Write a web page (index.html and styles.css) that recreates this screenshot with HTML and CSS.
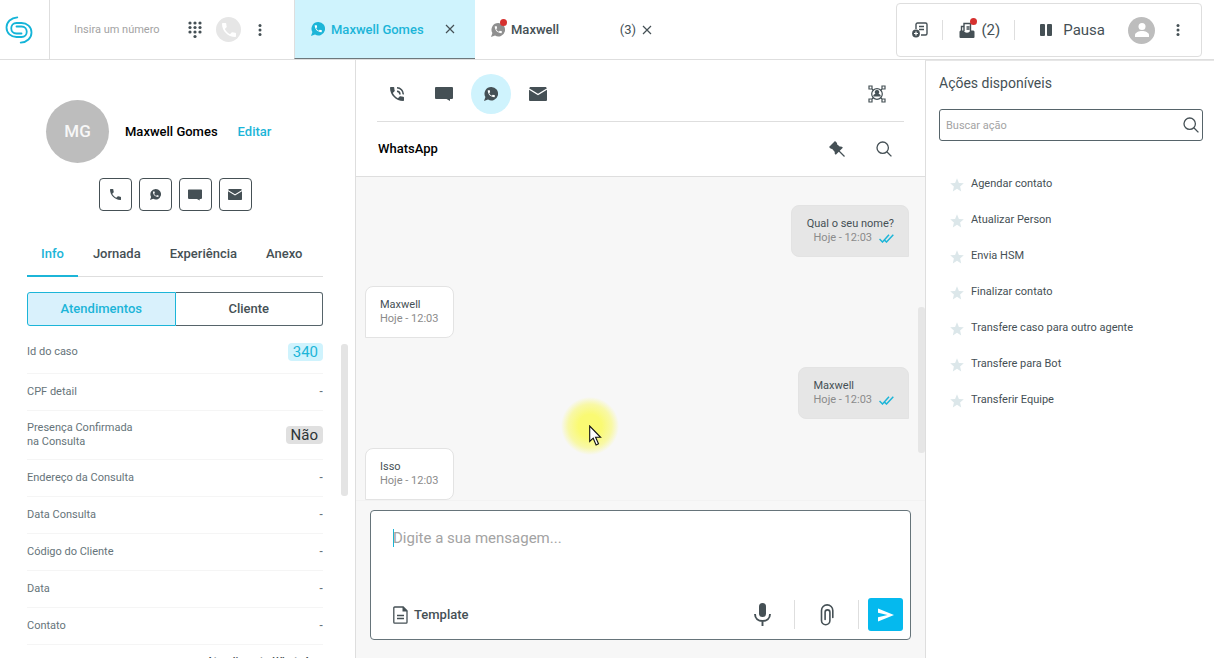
FILE: index.html
```html
<!DOCTYPE html>
<html lang="pt-BR">
<head>
  <meta charset="UTF-8">
  <meta name="viewport" content="width=device-width, initial-scale=1.0">
  <title>Atendimento - Maxwell Gomes</title>
  <link rel="stylesheet" href="styles.css">
</head>
<body>

  <!-- shared icons -->
  <svg class="sprite" aria-hidden="true">
    <symbol id="i-phone" viewBox="3 3 18 18">
      <path fill="currentColor" d="M6.62 10.79c1.44 2.83 3.76 5.14 6.59 6.59l2.2-2.2c.27-.27.67-.36 1.02-.24 1.12.37 2.33.57 3.57.57.55 0 1 .45 1 1V20c0 .55-.45 1-1 1-9.39 0-17-7.61-17-17 0-.55.45-1 1-1h3.5c.55 0 1 .45 1 1 0 1.25.2 2.45.57 3.57.11.35.03.74-.25 1.02l-2.2 2.2z"/>
    </symbol>
    <symbol id="i-whats" viewBox="0 0 24 24">
      <path fill="currentColor" d="M12.5 0a11.5 11.5 0 1 1-5.6 21.5L0 24l2.4-6.8A11.5 11.5 0 0 1 12.5 0z"/>
      <path class="cut" transform="translate(4.4 3.4) scale(.67)" d="M6.62 10.79c1.44 2.83 3.76 5.14 6.59 6.59l2.2-2.2c.27-.27.67-.36 1.02-.24 1.12.37 2.33.57 3.57.57.55 0 1 .45 1 1V20c0 .55-.45 1-1 1-9.39 0-17-7.61-17-17 0-.55.45-1 1-1h3.5c.55 0 1 .45 1 1 0 1.25.2 2.45.57 3.57.11.35.03.74-.25 1.02l-2.2 2.2z"/>
    </symbol>
    <symbol id="i-chat" viewBox="0 0 18 14">
      <path fill="currentColor" d="M1 0h16a1 1 0 0 1 1 1v10a1 1 0 0 1-1 1h-2v2l-3.5-2H1a1 1 0 0 1-1-1V1a1 1 0 0 1 1-1z"/>
    </symbol>
    <symbol id="i-mail" viewBox="0 0 18 14">
      <path fill="currentColor" d="M1.2 0h15.6L18 1.2 9 6.7 0 1.2zM0 2.8l9 5.5 9-5.5V13a1 1 0 0 1-1 1H1a1 1 0 0 1-1-1z"/>
    </symbol>
    <symbol id="i-dots" viewBox="0 0 4 12">
      <g fill="currentColor"><circle cx="2" cy="1.5" r="1.5"/><circle cx="2" cy="6" r="1.5"/><circle cx="2" cy="10.5" r="1.5"/></g>
    </symbol>
    <symbol id="i-close" viewBox="0 0 10 10">
      <path fill="none" stroke="currentColor" stroke-width="1.2" d="M1 1l8 8M9 1L1 9"/>
    </symbol>
    <symbol id="i-search" viewBox="0 0 16 16">
      <g fill="none" stroke="currentColor" stroke-width="1.3"><circle cx="6.7" cy="6.7" r="5.7"/><path d="M10.8 10.8l4.6 4.6"/></g>
    </symbol>
    <symbol id="i-check" viewBox="0 0 15 9">
      <path fill="none" stroke="currentColor" stroke-width="1.5" d="M.5 5l3 3L10 .8M5 5.6l2.5 2.4L14.3.8"/>
    </symbol>
    <symbol id="i-star" viewBox="0 0 14 14">
      <path fill="currentColor" d="M7 .3l1.9 4.6 4.9.4-3.7 3.2 1.1 4.9L7 10.8l-4.2 2.6 1.1-4.9L.2 5.3l4.9-.4z"/>
    </symbol>
  </svg>

  <header class="topbar">
    <a class="logo" href="#" aria-label="Início">
      <svg width="28" height="28" viewBox="0 0 28 28" fill="none" stroke="#14b4d8" stroke-width="1.8" stroke-linecap="round">
        <path d="M12.3 1.3C6 1.8 1.5 6 1.5 11.500c0 5.500 4.500 9.500 10 9.500h5c7 0 7-10.500 0-10.500h-5"/>
        <path d="M15.700 26.700C22 26.200 26.500 22 26.500 16.500c0-5.500-4.500-9.500-10-9.500h-5c-7 0-7 10.500 0 10.500h5"/>
      </svg>
    </a>

    <form class="dialer">
      <input class="dial-input" type="text" aria-label="Número" placeholder="Insira um número">
      <button class="icon-btn" type="button" aria-label="Teclado">
        <svg width="14" height="18" viewBox="0 0 14 18" fill="currentColor">
          <circle cx="2" cy="2" r="1.6"/><circle cx="7" cy="2" r="1.6"/><circle cx="12" cy="2" r="1.6"/>
          <circle cx="2" cy="6.5" r="1.6"/><circle cx="7" cy="6.5" r="1.6"/><circle cx="12" cy="6.5" r="1.6"/>
          <circle cx="2" cy="11" r="1.6"/><circle cx="7" cy="11" r="1.6"/><circle cx="12" cy="11" r="1.6"/>
          <circle cx="7" cy="15.5" r="1.6"/>
        </svg>
      </button>
      <button class="call-btn" type="button" aria-label="Ligar"><svg width="14" height="14"><use href="#i-phone"/></svg></button>
      <button class="icon-btn" type="button" aria-label="Mais opções"><svg width="4" height="12"><use href="#i-dots"/></svg></button>
    </form>

    <nav class="tabs">
      <div class="tab active">
        <svg width="14" height="14"><use href="#i-whats"/></svg>
        <a class="tab-name" href="#">Maxwell Gomes</a>
        <button class="icon-btn" type="button" aria-label="Fechar"><svg width="10" height="10"><use href="#i-close"/></svg></button>
      </div>
      <div class="tab waiting">
        <span class="badge-wrap"><svg class="muted" width="14" height="14"><use href="#i-whats"/></svg><i class="dot"></i></span>
        <a class="tab-name" href="#">Maxwell</a>
        <span class="count">(3)</span>
        <button class="icon-btn" type="button" aria-label="Fechar"><svg width="10" height="10"><use href="#i-close"/></svg></button>
      </div>
    </nav>

    <div class="agent-box">
      <button class="agent-item" type="button" aria-label="Novo caso">
        <svg width="16" height="16" viewBox="0 0 16 16" fill="none" stroke="currentColor" stroke-width="1.4">
          <path d="M4 7V2.5A1.5 1.5 0 0 1 5.500 1h8A1.5 1.5 0 0 1 15 2.500v9a1.500 1.500 0 0 1-1.500 1.500H9M7 4.500h5M7 7.500h5"/>
          <circle cx="4" cy="11.5" r="3.9" fill="currentColor" stroke="none"/>
          <path stroke="#fff" stroke-width="1.2" d="M4 9.500v4M2 11.500h4"/>
        </svg>
      </button>
      <button class="agent-item queue" type="button">
        <span class="badge-wrap">
          <svg width="16" height="16" viewBox="0 0 16 16" fill="none" stroke="currentColor" stroke-width="1.4">
            <path d="M2.500 9V4.500H5M5 9V1.500h6.500V9M7.500 5h3M7.500 7h3"/>
            <path fill="currentColor" stroke="none" d="M1.500 8.500h3.300c.6 1.500 1.700 2.200 3.200 2.200s2.600-.7 3.200-2.200h3.300l1 1V15a1 1 0 0 1-1 1h-13a1 1 0 0 1-1-1V9.500z"/>
          </svg>
          <i class="dot"></i>
        </span>
        (2)
      </button>
      <button class="agent-item pause" type="button">
        <svg width="12" height="12" viewBox="0 0 12 12" fill="currentColor"><rect width="5" height="12" rx="1"/><rect x="7" width="5" height="12" rx="1"/></svg>
        Pausa
      </button>
      <span class="agent-photo">
        <svg width="14" height="14" viewBox="0 0 14 14" fill="#fff"><circle cx="7" cy="3.500" r="3.500"/><path d="M0 14v-2c0-2.500 4-4 7-4s7 1.500 7 4v2z"/></svg>
      </span>
      <button class="icon-btn" type="button" aria-label="Menu"><svg width="4" height="12"><use href="#i-dots"/></svg></button>
    </div>
  </header>

  <main class="layout">
    <aside class="client">
      <div class="person">
        <div class="avatar">MG</div>
        <h1>Maxwell Gomes</h1>
        <a href="#">Editar</a>
      </div>

      <div class="contact-btns">
        <button type="button" aria-label="Telefone"><svg width="11" height="11"><use href="#i-phone"/></svg></button>
        <button type="button" aria-label="WhatsApp"><svg width="11" height="11"><use href="#i-whats"/></svg></button>
        <button type="button" aria-label="Chat"><svg width="14" height="12"><use href="#i-chat"/></svg></button>
        <button type="button" aria-label="E-mail"><svg width="14" height="11"><use href="#i-mail"/></svg></button>
      </div>

      <nav class="client-tabs">
        <a class="active" href="#">Info</a>
        <a href="#">Jornada</a>
        <a href="#">Experiência</a>
        <a href="#">Anexo</a>
      </nav>

      <div class="switch">
        <button class="active" type="button">Atendimentos</button>
        <button type="button">Cliente</button>
      </div>

      <div class="case">
        <dl>
          <div><dt>Id do caso</dt><dd><span class="tag blue">340</span></dd></div>
          <div><dt>CPF detail</dt><dd>-</dd></div>
          <div><dt>Presença Confirmada na Consulta</dt><dd><span class="tag">Não</span></dd></div>
          <div><dt>Endereço da Consulta</dt><dd>-</dd></div>
          <div><dt>Data Consulta</dt><dd>-</dd></div>
          <div><dt>Código do Cliente</dt><dd>-</dd></div>
          <div><dt>Data</dt><dd>-</dd></div>
          <div><dt>Contato</dt><dd>-</dd></div>
          <div class="origin"><dt></dt><dd>Atendimento WhatsApp</dd></div>
        </dl>
        <span class="case-thumb"></span>
      </div>
    </aside>

    <section class="conversation">
      <div class="channels">
        <button type="button" aria-label="Ligação">
          <svg width="14" height="14" viewBox="3 3 18 18">
            <use href="#i-phone" x="3" y="3" width="18" height="18"/>
            <path fill="none" stroke="currentColor" stroke-width="2" d="M12 8.500a4 4 0 0 1 3.800 4M12 4a8.300 8.300 0 0 1 8 8.500"/>
          </svg>
        </button>
        <button type="button" aria-label="Chat"><svg width="18" height="14"><use href="#i-chat"/></svg></button>
        <button class="active" type="button" aria-label="WhatsApp"><svg width="14" height="14"><use href="#i-whats"/></svg></button>
        <button type="button" aria-label="E-mail"><svg width="18" height="14"><use href="#i-mail"/></svg></button>
        <button class="focus-btn" type="button" aria-label="Dados do contato">
          <svg width="18" height="18" viewBox="0 0 18 18" fill="none" stroke="currentColor" stroke-width="1.2">
            <path d="M1 1h3v3H1zM14 1h3v3h-3zM1 14h3v3H1zM14 14h3v3h-3zM4 4l1.500 1.500M14 4l-1.500 1.500M4 14l1.500-1.500M14 14l-1.500-1.500"/>
            <circle cx="9" cy="9" r="5.300"/>
            <path fill="currentColor" stroke="none" d="M9 5a2.200 2.200 0 0 1 1.600 3.800c1.500.5 2.200 1.300 2.200 2.700H5.200c0-1.400.7-2.200 2.200-2.700A2.200 2.200 0 0 1 9 5z"/>
          </svg>
        </button>
      </div>

      <div class="conv-title">
        <h2>WhatsApp</h2>
        <button class="icon-btn" type="button" aria-label="Fixar">
          <svg width="16" height="16" viewBox="0 0 16 16">
            <path fill="currentColor" d="M6 0l1.800 1.800c.4.500.4.900.2 1.400l3 2.500c.9-.3 1.700-.2 2.300.4l.5.700-7 7-.6-.6c-.6-.6-.7-1.400-.4-2.300L3 7.800c-.5.200-1 .2-1.400-.2L0 6z"/>
            <path stroke="currentColor" stroke-width="1.300" d="M9.500 9.500l6 6"/>
          </svg>
        </button>
        <button class="icon-btn" type="button" aria-label="Buscar"><svg width="16" height="16"><use href="#i-search"/></svg></button>
      </div>

      <div class="messages">
        <div class="bubble sent">
          <p>Qual o seu nome?</p>
          <small>Hoje - 12:03 <svg width="15" height="9"><use href="#i-check"/></svg></small>
        </div>
        <div class="bubble">
          <p>Maxwell</p>
          <small>Hoje - 12:03</small>
        </div>
        <div class="bubble sent">
          <p>Maxwell</p>
          <small>Hoje - 12:03 <svg width="15" height="9"><use href="#i-check"/></svg></small>
        </div>
        <div class="bubble">
          <p>Isso</p>
          <small>Hoje - 12:03</small>
        </div>
        <span class="messages-thumb"></span>
        <span class="pointer">
          <svg width="13" height="21" viewBox="0 0 13 21">
            <path fill="#fff" stroke="#111" stroke-width="1.100" d="M.7 1v15.500l3.500-3.300 2.900 6.700 2.400-1.100-2.900-6.500h5z"/>
          </svg>
        </span>
      </div>

      <form class="composer">
        <textarea aria-label="Mensagem" placeholder="Digite a sua mensagem..."></textarea>
        <div class="composer-bar">
          <button class="template" type="button">
            <svg width="15" height="18" viewBox="0 0 15 18" fill="none" stroke="currentColor" stroke-width="1.300">
              <path d="M1.700 1h8.500L14 4.800v11.500a.9.9 0 0 1-.9.900H1.700A.9.9 0 0 1 .8 16.300V1.900A.9.9 0 0 1 1.700 1zM4 9.500h7M4 12.500h7"/>
              <path fill="currentColor" stroke="none" d="M9.500.8V5.500h5z"/>
            </svg>
            Template
          </button>
          <button class="tool" type="button" aria-label="Gravar áudio">
            <svg width="17" height="23" viewBox="0 0 17 23">
              <rect x="5" y="0" width="7" height="14" rx="3.500" fill="currentColor"/>
              <path fill="none" stroke="currentColor" stroke-width="1.900" d="M1 11c0 4.500 3.300 7 7.500 7s7.500-2.500 7.500-7M8.500 18v5"/>
            </svg>
          </button>
          <button class="tool" type="button" aria-label="Anexar">
            <svg width="14" height="22" viewBox="0 0 14 22" fill="none" stroke="currentColor" stroke-width="1.600" stroke-linecap="round">
              <path d="M12.800 13.500V6.500a5.500 5.500 0 0 0-11.300 0v10a4.200 4.200 0 0 0 8.400 0V8.300a2.400 2.400 0 0 0-4.800 0v7.200"/>
            </svg>
          </button>
          <button class="send" type="submit" aria-label="Enviar">
            <svg width="16" height="14" viewBox="0 0 16 14"><path fill="#fff" d="M0 .5L16 7 0 13.500V9.200L9.500 7 0 4.800z"/></svg>
          </button>
        </div>
      </form>
    </section>

    <aside class="actions">
      <h2>Ações disponíveis</h2>
      <div class="search">
        <input type="text" aria-label="Buscar ação" placeholder="Buscar ação">
        <svg width="16" height="16"><use href="#i-search"/></svg>
      </div>
      <ul>
        <li><svg width="14" height="14"><use href="#i-star"/></svg><a href="#">Agendar contato</a></li>
        <li><svg width="14" height="14"><use href="#i-star"/></svg><a href="#">Atualizar Person</a></li>
        <li><svg width="14" height="14"><use href="#i-star"/></svg><a href="#">Envia HSM</a></li>
        <li><svg width="14" height="14"><use href="#i-star"/></svg><a href="#">Finalizar contato</a></li>
        <li><svg width="14" height="14"><use href="#i-star"/></svg><a href="#">Transfere caso para outro agente</a></li>
        <li><svg width="14" height="14"><use href="#i-star"/></svg><a href="#">Transfere para Bot</a></li>
        <li><svg width="14" height="14"><use href="#i-star"/></svg><a href="#">Transferir Equipe</a></li>
      </ul>
    </aside>
  </main>

</body>
</html>
```
FILE: styles.css
```css
* {
  box-sizing: border-box;
}

body {
  font-family: Roboto, sans-serif;
  font-size: 13px;
  color: #455055;
  background: white;
  display: flex;
  flex-direction: column;
  height: 100vh;
  margin: 0;
  overflow: hidden;
}

h1, h2, p, dl, dd, ul {
  margin: 0;
  padding: 0;
}

a {
  color: inherit;
  text-decoration: none;
}

svg {
  display: block;
  flex: none;
}

button {
  display: flex;
  align-items: center;
  justify-content: center;
  font: inherit;
  color: inherit;
  background: none;
  border: none;
  padding: 0;
  cursor: pointer;
}

input, textarea {
  font: inherit;
  color: inherit;
  background: none;
  border: none;
  outline: none;
  padding: 0;
}

::placeholder {
  color: #a3a3a3;
  opacity: 1;
}

.sprite {
  position: absolute;
  width: 0;
  height: 0;
}

.cut {
  fill: white;
}

/* top bar */

.topbar {
  display: flex;
  height: 60px;
  flex: none;
  border-bottom: 1px solid #dedede;
}

.logo {
  width: 50px;
  display: flex;
  align-items: center;
  padding-left: 5px;
  border-right: 1px solid #dedede;
}

.dialer {
  width: 244px;
  display: flex;
  align-items: center;
  gap: 14px;
  padding-left: 24px;
}

.dial-input {
  width: 100px;
  font-size: 11px;
}

.call-btn {
  width: 25px;
  height: 25px;
  border-radius: 50%;
  background: #e6e6e6;
  color: white;
}

.dialer .icon-btn:last-child {
  margin-left: 3px;
}

.tabs {
  display: flex;
}

.tab {
  width: 181px;
  display: flex;
  align-items: center;
  gap: 6px;
  padding: 0 20px 0 16px;
  font-weight: 500;
}

.tab.active {
  background: #cff3fd;
  color: #1cb5d8;
  border-left: 1px solid #dedede;
  border-bottom: 1px solid #6d787c;
}

.tab.waiting {
  width: 197px;
}

.tab-name {
  flex: 1;
}

.tab .icon-btn {
  color: #455055;
}

.tab .muted {
  color: #8f8f8f;
}

.count {
  font-weight: 400;
}

.badge-wrap {
  position: relative;
}

.dot {
  position: absolute;
  top: -4px;
  right: -2px;
  width: 7px;
  height: 7px;
  border-radius: 50%;
  background: #d6312f;
}

.agent-box {
  display: flex;
  align-items: center;
  margin: 3px 12px 2px auto;
  padding: 0 21px 0 15px;
  border: 1px solid #dedede;
  border-radius: 4px;
  font-size: 15px;
}

.agent-item {
  height: 20px;
  padding-right: 14px;
  gap: 6px;
}

.queue {
  padding: 0 14px 0 16px;
  border: solid #dedede;
  border-width: 0 1px;
}

.pause {
  gap: 11px;
  padding: 0 23px 0 25px;
}

.agent-photo {
  display: flex;
  align-items: center;
  justify-content: center;
  width: 27px;
  height: 27px;
  margin-right: 21px;
  border-radius: 50%;
  background: #bdbdbd;
}

/* columns */

.layout {
  flex: 1;
  min-height: 0;
  display: grid;
  grid-template-columns: 356px 1fr 289px;
}

.client {
  display: flex;
  flex-direction: column;
  min-height: 0;
  padding: 40px 32px 0 27px;
  border-right: 1px solid #dedede;
}

.person {
  display: flex;
  align-items: center;
  padding-left: 19px;
}

.avatar {
  width: 63px;
  height: 63px;
  line-height: 63px;
  text-align: center;
  border-radius: 50%;
  background: #bdbdbd;
  color: #f7f7f7;
  font-size: 17px;
  font-weight: 500;
}

.person h1 {
  margin: 0 20px 0 16px;
  font-size: 13px;
  font-weight: 500;
  color: black;
}

.person a {
  color: #1cb5d8;
  font-weight: 500;
}

.contact-btns {
  display: flex;
  justify-content: center;
  gap: 7px;
  margin-top: 15px;
}

.contact-btns button {
  width: 33px;
  height: 33px;
  border: 1px solid #455055;
  border-radius: 4px;
}

.client-tabs {
  display: flex;
  gap: 1px;
  margin-top: 22px;
  border-bottom: 1px solid #dedede;
  font-weight: 500;
}

.client-tabs a {
  padding: 0 14px;
  line-height: 42px;
}

.client-tabs .active {
  color: #1cb5d8;
  margin-bottom: -1px;
  border-bottom: 2px solid #1cb5d8;
}

.switch {
  display: flex;
  margin-top: 15px;
}

.switch button {
  flex: 1;
  height: 34px;
  padding-bottom: 2px;
  border: 1px solid #56646a;
  border-left: none;
  border-radius: 0 3px 3px 0;
  font-weight: 500;
}

.switch .active {
  border: 1px solid #1cb5d8;
  border-radius: 3px 0 0 3px;
  background: #d9f1fc;
  color: #1cb5d8;
}

.case {
  position: relative;
  flex: 1;
  min-height: 0;
  margin-top: 5px;
}

.case dl {
  height: 100%;
  overflow: hidden;
  font-size: 11px;
  line-height: 14px;
  color: #66747a;
}

.case dl div {
  display: flex;
  align-items: center;
  justify-content: space-between;
  min-height: 37px;
  padding: 10px 0;
  border-bottom: 1px solid #f5f5f5;
}

.case dl div:first-child {
  height: 43px;
}

.case dl div:nth-child(3) {
  height: 49px;
}

.case dl .origin {
  align-items: flex-start;
  color: #455055;
}

.case dt {
  max-width: 120px;
}

.case dd {
  font-weight: 500;
}

.tag {
  display: block;
  padding: 0 5px;
  line-height: 18px;
  border-radius: 4px;
  background: #e0e0e0;
  color: #2d3436;
  font-size: 15px;
  font-weight: 400;
}

.tag.blue {
  background: #cff3fd;
  color: #1cb5d8;
}

.case-thumb {
  position: absolute;
  top: 13px;
  right: -25px;
  width: 7px;
  height: 152px;
  border-radius: 3px;
  background: #e4e4e4;
}

/* conversation */

.conversation {
  display: flex;
  flex-direction: column;
  min-height: 0;
  background: #f7f7f7;
}

.channels {
  display: flex;
  align-items: center;
  gap: 7px;
  height: 62px;
  flex: none;
  padding-top: 5px;
  background: white;
  border: solid white;
  border-width: 0 21px;
  box-shadow: inset 0 -1px #dedede;
}

.channels button {
  width: 40px;
  height: 40px;
  border-radius: 50%;
}

.channels .active {
  background: #cff3fd;
}

.channels .active .cut {
  fill: #cff3fd;
}

.channels .focus-btn {
  margin-left: auto;
  margin-right: 7px;
}

.conv-title {
  display: flex;
  align-items: center;
  gap: 31px;
  height: 55px;
  flex: none;
  padding: 0 33px 1px 22px;
  background: white;
  border-bottom: 1px solid #dedede;
}

.conv-title h2 {
  flex: 1;
  font-size: 13px;
  font-weight: 500;
  color: black;
}

.messages {
  position: relative;
  flex: 1;
  min-height: 0;
  display: flex;
  flex-direction: column;
  align-items: flex-start;
  gap: 29px;
  padding: 28px 16px 0 9px;
  overflow: hidden;
  border-bottom: 1px solid #f2f2f2;
}

.bubble {
  flex: none;
  height: 52px;
  padding: 11px 15px 0 14px;
  border: 1px solid #e3e3e3;
  border-radius: 8px 8px 8px 0;
  background: white;
  font-size: 11px;
  line-height: 14px;
}

.bubble.sent {
  align-self: flex-end;
  padding: 11px 14px 0 15px;
  border-radius: 8px 8px 0 8px;
  background: #e6e6e6;
}

.bubble small {
  display: flex;
  align-items: center;
  justify-content: flex-end;
  gap: 7px;
  font-size: 11px;
  color: #8b8b8b;
}

.bubble svg {
  color: #1cb5d8;
}

.messages-thumb {
  position: absolute;
  top: 130px;
  right: 0;
  width: 7px;
  height: 146px;
  border-radius: 3px;
  background: #e6e6e6;
}

/* mouse pointer with highlight */
.pointer {
  position: absolute;
  top: 220px;
  left: 205px;
  width: 58px;
  height: 58px;
  padding: 28px;
  background: radial-gradient(circle closest-side, #fafa73 40%, #f8f8a6 75%, transparent);
}

.composer {
  flex: none;
  margin: 9px 14px 18px;
  padding: 18px 7px 8px 22px;
  border: 1px solid #66747a;
  border-radius: 4px;
  background: white;
}

.composer textarea {
  display: block;
  width: 100%;
  height: 69px;
  resize: none;
  font-size: 15px;
  line-height: 18px;
  background: linear-gradient(#1cb5d8, #1cb5d8) no-repeat 0 0 / 1px 18px;
}

.composer-bar {
  display: flex;
  align-items: center;
}

.template {
  gap: 6px;
  margin-right: auto;
  font-weight: 500;
}

.tool {
  width: 64px;
  height: 29px;
  border-right: 1px solid #dedede;
}

.send {
  width: 35px;
  height: 33px;
  margin-left: 9px;
  border-radius: 3px;
  background: #05b9ee;
}

/* actions */

.actions {
  padding: 14px 11px 0 13px;
  border-left: 1px solid #dedede;
  border-top: 1px solid #e6e6e6;
}

.actions h2 {
  font-size: 14px;
  font-weight: 400;
  line-height: 16px;
}

.search {
  display: flex;
  align-items: center;
  height: 32px;
  margin-top: 18px;
  padding: 0 3px 0 6px;
  border: 1px solid #56646a;
  border-radius: 3px;
}

.search input {
  flex: 1;
  font-size: 11px;
}

.actions ul {
  margin-top: 24px;
  padding-left: 11px;
  list-style: none;
  font-size: 11px;
}

.actions li {
  display: flex;
  align-items: center;
  gap: 7px;
  height: 36px;
}

.actions li svg {
  margin-top: 3px;
  color: #dce7ea;
}
```
